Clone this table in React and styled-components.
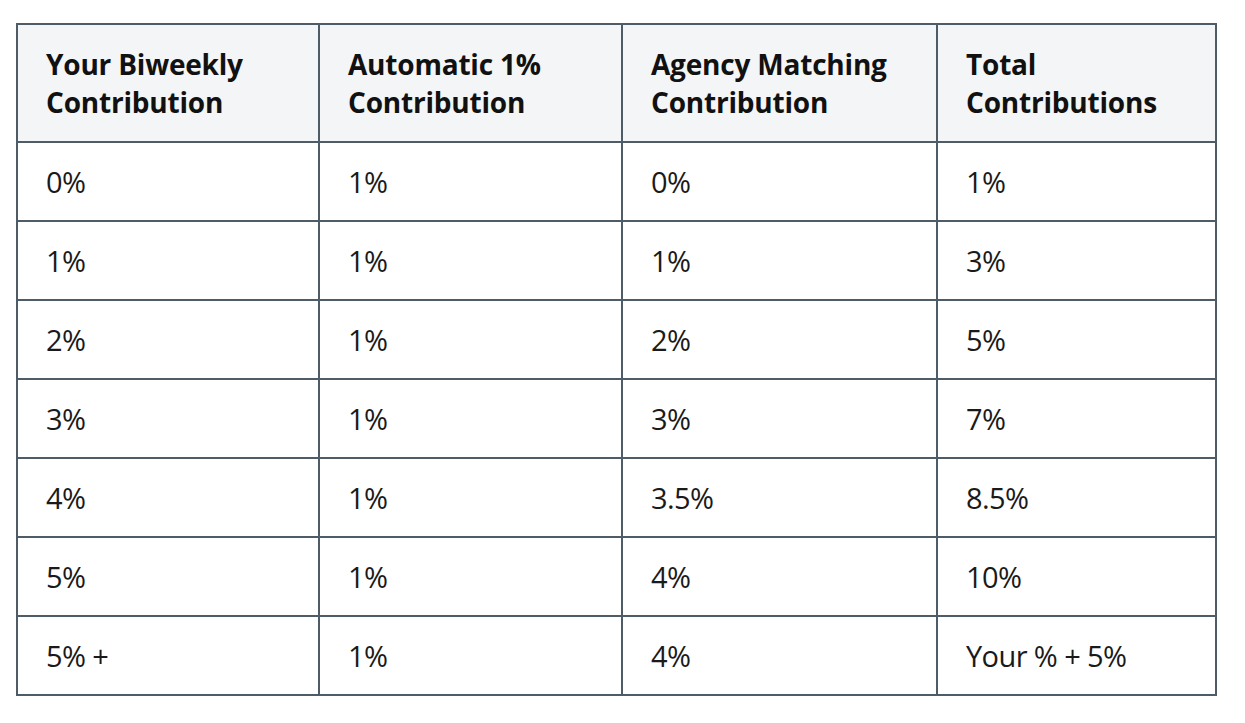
import React from "react";
import styled, { createGlobalStyle } from "styled-components";

const Global = createGlobalStyle`
  html, body { margin: 0; padding: 0; background: #ffffff; }
  body { font-family: "Open Sans", "Noto Sans", "Liberation Sans", sans-serif; }
`;

const Page = styled.div({
  padding: "23px 0 0 16px",
});

const Table = styled.table({
  borderCollapse: "collapse",
  tableLayout: "fixed",
  width: "1199px",
  color: "#111",
});

const Head = styled.th({
  background: "#f3f5f6",
  border: "2px solid #4d5c66",
  height: "118px",
  padding: "0 16px 0 28px",
  textAlign: "left",
  fontSize: "28px",
  fontWeight: 700,
  lineHeight: "38px",
  letterSpacing: "-0.2px",
  verticalAlign: "middle",
  boxSizing: "border-box",
});

const Cell = styled.td({
  border: "2px solid #4d5c66",
  height: "77px",
  padding: "0 16px 0 28px",
  fontSize: "29px",
  fontWeight: 400,
  letterSpacing: "-0.6px",
  color: "#1a1a1a",
  verticalAlign: "middle",
});

const cols = [302, 303, 315, 279];
const headers = [
  ["Your Biweekly", "Contribution"],
  ["Automatic 1%", "Contribution"],
  ["Agency Matching", "Contribution"],
  ["Total", "Contributions"],
];
const rows = [
  ["0%", "1%", "0%", "1%"],
  ["1%", "1%", "1%", "3%"],
  ["2%", "1%", "2%", "5%"],
  ["3%", "1%", "3%", "7%"],
  ["4%", "1%", "3.5%", "8.5%"],
  ["5%", "1%", "4%", "10%"],
  ["5% +", "1%", "4%", "Your % + 5%"],
];

export default function App() {
  return (
    <Page>
      <Global />
      <Table>
        <colgroup>
          {cols.map((w, i) => <col key={i} style={{ width: w + "px" }} />)}
        </colgroup>
        <thead>
          <tr>
            {headers.map((h, i) => (
              <Head key={i}>{h[0]}<br />{h[1]}</Head>
            ))}
          </tr>
        </thead>
        <tbody>
          {rows.map((r, i) => (
            <tr key={i}>
              {r.map((c, j) => <Cell key={j}>{c}</Cell>)}
            </tr>
          ))}
        </tbody>
      </Table>
    </Page>
  );
}
